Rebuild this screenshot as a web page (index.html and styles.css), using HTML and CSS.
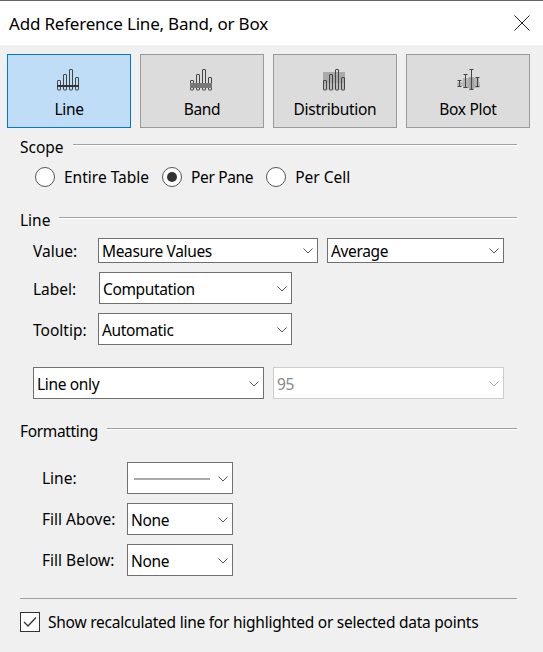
FILE: index.html
```html
<!DOCTYPE html>
<html lang="en">
<head>
    <meta charset="UTF-8">
    <meta name="viewport" content="width=device-width, initial-scale=1.0">
    <title>Add Reference Line, Band, or Box</title>
    <link rel="stylesheet" href="styles.css">
</head>
<body>
    <svg class="defs" width="0" height="0">
        <defs>
            <g id="bars" fill="none" stroke="#444" stroke-width="1">
                <rect x="1.5" y="12.5" width="3" height="9.5" rx="0.5"/>
                <rect x="7.5" y="6.5" width="3" height="15.5" rx="0.5"/>
                <rect x="13.5" y="1.5" width="3" height="20.5" rx="0.5"/>
                <rect x="19.5" y="9.5" width="3" height="12.5" rx="0.5"/>
            </g>
            <path id="chev" d="M0.5 0.5 L5 5 L9.5 0.5" fill="none" stroke="#555" stroke-width="1"/>
        </defs>
    </svg>

    <header class="titlebar">
        <span class="title">Add Reference Line, Band, or Box</span>
        <svg class="close" width="16" height="16" viewBox="0 0 16 16"><path d="M0.5 0.5 L15.5 15.5 M15.5 0.5 L0.5 15.5" stroke="#222" stroke-width="1" fill="none"/></svg>
    </header>

    <div class="tabs">
        <div class="tab active">
            <svg width="24" height="23" viewBox="0 0 24 23"><use href="#bars"/><rect x="1" y="17" width="22" height="2" fill="#333"/></svg>
            <span>Line</span>
        </div>
        <div class="tab">
            <svg width="24" height="23" viewBox="0 0 24 23"><use href="#bars"/><rect x="1" y="15" width="22" height="5" fill="#777"/></svg>
            <span>Band</span>
        </div>
        <div class="tab">
            <svg width="24" height="23" viewBox="0 0 24 23"><rect x="1" y="4" width="22" height="11" fill="#aaa"/><rect x="1" y="15" width="22" height="7" fill="#bbb"/><use href="#bars"/></svg>
            <span>Distribution</span>
        </div>
        <div class="tab">
            <svg class="wide" width="26" height="23" viewBox="0 0 26 23">
                <rect x="2" y="14" width="23" height="4" fill="#bbb"/>
                <rect x="8" y="10" width="16" height="10" fill="#b4b4b4"/>
                <rect x="14" y="9" width="5" height="12" fill="#a4a4a4"/>
                <path d="M4.5 12 V19 M2.5 12.5 H6.5 M2.5 18.5 H6.5 M10.5 6 V20 M8.5 6.5 H12.5 M8.5 19.5 H12.5 M16.5 1 V22 M14.5 1.5 H18.5 M14.5 21.5 H18.5 M22.5 9 V19 M20.5 9.5 H24.5 M20.5 18.5 H24.5" fill="none" stroke="#444" stroke-width="1"/>
            </svg>
            <span>Box Plot</span>
        </div>
    </div>

    <section class="group scope">
        <div class="legend"><span>Scope</span><i></i></div>
        <div class="radios">
            <div class="radio"><b class="dot"></b>Entire Table</div>
            <div class="radio tight"><b class="dot on"></b>Per Pane</div>
            <div class="radio"><b class="dot"></b>Per Cell</div>
        </div>
    </section>

    <section class="group line-group">
        <div class="legend"><span>Line</span><i></i></div>
        <div class="row row-value">
            <label class="lbl">Value:</label>
            <div class="select sel-value">Measure Values<svg width="10" height="6"><use href="#chev"/></svg></div>
            <div class="select sel-agg">Average<svg width="10" height="6"><use href="#chev"/></svg></div>
        </div>
        <div class="row row-label">
            <label class="lbl">Label:</label>
            <div class="select sel-label">Computation<svg width="10" height="6"><use href="#chev"/></svg></div>
        </div>
        <div class="row row-tooltip">
            <label class="lbl">Tooltip:</label>
            <div class="select sel-tooltip">Automatic<svg width="10" height="6"><use href="#chev"/></svg></div>
        </div>
        <div class="row row-band">
            <div class="select sel-only">Line only<svg width="10" height="6"><use href="#chev"/></svg></div>
            <div class="select sel-conf disabled">95<svg width="10" height="6"><use href="#chev"/></svg></div>
        </div>
    </section>

    <section class="group formatting">
        <div class="legend"><span>Formatting</span><i></i></div>
        <div class="row fmt-row">
            <label class="lbl">Line:</label>
            <div class="select sel-fmt"><span class="sample"></span><svg width="10" height="6"><use href="#chev"/></svg></div>
        </div>
        <div class="row fmt-row">
            <label class="lbl">Fill Above:</label>
            <div class="select sel-fmt">None<svg width="10" height="6"><use href="#chev"/></svg></div>
        </div>
        <div class="row fmt-row">
            <label class="lbl">Fill Below:</label>
            <div class="select sel-fmt">None<svg width="10" height="6"><use href="#chev"/></svg></div>
        </div>
    </section>

    <div class="footer">
        <div class="check-row">
            <span class="check"><svg width="14" height="12" viewBox="0 0 14 12"><path d="M1 6 L5 10 L13 1.5" fill="none" stroke="#333" stroke-width="1.3"/></svg></span>
            Show recalculated line for highlighted or selected data points
        </div>
    </div>
</body>
</html>
```

FILE: styles.css
```css
* {
    box-sizing: border-box;
}

body {
    margin: 0;
    height: 652px;
    overflow: hidden;
    background-color: #f0f0f0;
    color: #000;
    font-family: "Noto Sans", sans-serif;
    font-size: 15.5px;
}

.defs {
    position: absolute;
}

.titlebar {
    display: flex;
    align-items: center;
    justify-content: space-between;
    height: 45px;
    padding: 0 13px 0 9px;
    background-color: white;
    border-top: 1px solid #666;
}

.title {
    font-size: 17px;
    letter-spacing: -0.2px;
}

.tabs {
    display: flex;
    gap: 9px;
    padding: 9px 0 0 7px;
}

.tab {
    display: flex;
    flex-direction: column;
    align-items: center;
    width: 124px;
    height: 74px;
    padding-top: 13px;
    background-color: #dcdcdc;
    border: 1px solid #999;
}

.tab svg {
    margin-right: 2px;
}

.tab svg.wide {
    margin-right: 0;
}

.tab span {
    margin-top: 7px;
    font-size: 15.5px;
    letter-spacing: -0.3px;
    line-height: 22px;
}

.tab.active {
    background-color: #bfddf6;
    border-color: #0078d4;
}

.group {
    padding: 0 26px 0 20px;
}

.legend {
    display: flex;
    align-items: center;
    gap: 9px;
    height: 20px;
}

.legend i {
    flex: 1;
    height: 2px;
    margin-top: -4px;
    background-color: #a0a0a0;
    border-bottom: 1px solid white;
}

.formatting .legend span {
    letter-spacing: -0.35px;
}

.scope {
    margin-top: 9px;
}

.radios {
    display: flex;
    gap: 13px;
    margin: 9px 0 0 15px;
}

.radio {
    display: flex;
    align-items: center;
    gap: 9px;
    height: 22px;
}

.radio.tight {
    letter-spacing: -0.35px;
}

.dot {
    position: relative;
    width: 20px;
    height: 20px;
    background-color: white;
    border: 1px solid #555;
    border-radius: 50%;
}

.dot.on::after {
    content: "";
    position: absolute;
    top: 4px;
    left: 4px;
    width: 10px;
    height: 10px;
    background-color: #333;
    border-radius: 50%;
}

.line-group {
    margin-top: 22px;
}

.row {
    display: flex;
    align-items: center;
}

.lbl {
    flex: none;
}

.select {
    display: flex;
    align-items: center;
    justify-content: space-between;
    flex: none;
    padding: 0 4px 0 3px;
    background-color: white;
    border: 1px solid #707070;
    letter-spacing: -0.35px;
    line-height: 20px;
}

.select svg {
    flex: none;
}

.select.disabled {
    color: #888;
    border-color: #ccc;
}

.select.disabled svg {
    opacity: 0.45;
}

.row-value {
    margin-top: 8px;
    padding-left: 13px;
}

.row-value .lbl,
.row-tooltip .lbl {
    width: 65px;
}

.sel-value {
    width: 220px;
    height: 25px;
}

.sel-agg {
    width: 177px;
    height: 25px;
    margin-left: 9px;
}

.row-label {
    margin-top: 9px;
    padding-left: 13px;
}

.row-label .lbl {
    width: 66px;
}

.row-label .lbl,
.row-tooltip .lbl {
    padding-top: 2px;
}

.sel-label {
    width: 193px;
    height: 32px;
    padding-top: 2px;
}

.row-tooltip {
    margin-top: 9px;
    padding-left: 13px;
}

.sel-tooltip {
    width: 194px;
    height: 32px;
    padding-top: 2px;
}

.row-band {
    gap: 9px;
    margin-top: 22px;
    padding-left: 13px;
}

.sel-only {
    width: 231px;
    height: 32px;
    padding-top: 2px;
}

.sel-conf {
    width: 231px;
    height: 32px;
    padding-top: 2px;
}

.formatting {
    margin-top: 22px;
}

.fmt-row {
    margin-top: 9px;
    padding-left: 22px;
}

.formatting .legend + .fmt-row {
    margin-top: 21px;
}

.fmt-row .lbl {
    width: 85px;
}

.sel-fmt {
    width: 106px;
    height: 32px;
    padding-top: 2px;
}

.sample {
    width: 76px;
    height: 2px;
    margin-left: 3px;
    background-color: #aaa;
}

.footer {
    margin: 22px 26px 0 20px;
    padding-top: 12px;
    border-top: 1px solid #a0a0a0;
}

.check-row {
    display: flex;
    align-items: center;
    gap: 8px;
    letter-spacing: -0.24px;
    white-space: nowrap;
}

.check {
    display: flex;
    align-items: center;
    justify-content: center;
    width: 20px;
    height: 20px;
    background-color: white;
    border: 1px solid #333;
}
```
